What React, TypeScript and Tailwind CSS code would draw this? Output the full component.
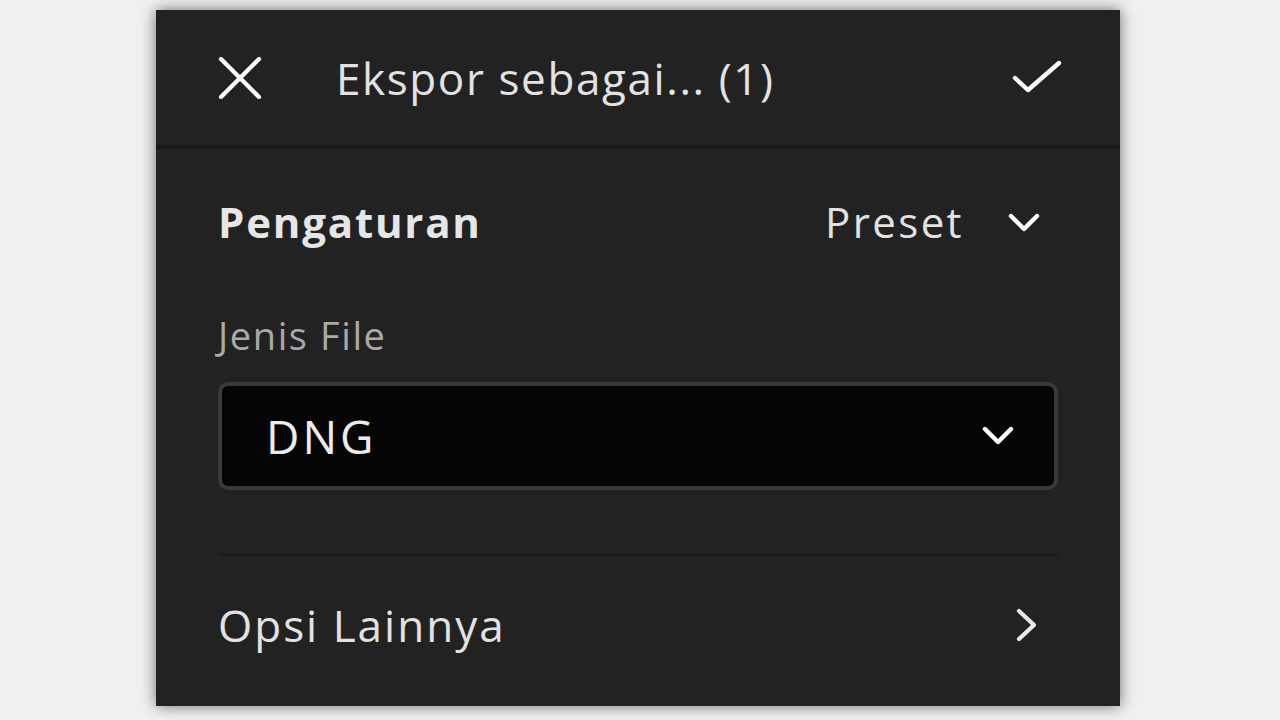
function CloseIcon() {
  return (
    <svg width="44" height="42" viewBox="0 0 44 42" fill="none" className="shrink-0">
      <path d="M3 2 L41 40 M41 2 L3 40" stroke="#fff" strokeWidth="4.2" strokeLinecap="round" />
    </svg>
  );
}

function CheckIcon() {
  return (
    <svg width="50" height="36" viewBox="0 0 50 36" fill="none" className="shrink-0">
      <path
        d="M3 18 L16 30 L47 3"
        stroke="#fff"
        strokeWidth="4.4"
        strokeLinecap="round"
        strokeLinejoin="round"
      />
    </svg>
  );
}

function Chevron({ dir = "down" }: { dir?: "down" | "right" }) {
  if (dir === "right") {
    return (
      <svg width="26" height="36" viewBox="0 0 26 36" fill="none" className="shrink-0">
        <path
          d="M5 4 L20 18 L5 32"
          stroke="#e8e8e8"
          strokeWidth="4.2"
          strokeLinecap="round"
          strokeLinejoin="round"
        />
      </svg>
    );
  }
  return (
    <svg width="32" height="22" viewBox="0 0 32 22" fill="none" className="shrink-0">
      <path
        d="M3 4 L16 17 L29 4"
        stroke="#fff"
        strokeWidth="4.4"
        strokeLinecap="round"
        strokeLinejoin="round"
      />
    </svg>
  );
}

export default function App() {
  return (
    <div
      className="h-[720px] w-[1280px] overflow-hidden bg-[#f0f0f0] pl-[156px] pt-[10px]"
      style={{ fontFamily: '"Open Sans", "Liberation Sans", sans-serif' }}
    >
      <section className="flex h-[696px] w-[964px] flex-col bg-[#222222] shadow-[0_0_14px_rgba(0,0,0,0.55)]">
        <header className="flex h-[135px] items-center pl-[62px] pr-[58px]">
          <CloseIcon />
          <h1 className="ml-[74px] flex-1 text-[44px] leading-none tracking-[1.6px] text-[#e2e2e2]">
            Ekspor sebagai... (1)
          </h1>
          <CheckIcon />
        </header>
        <div className="h-[4px] bg-[#1a1a1a]" />

        <div className="flex flex-1 flex-col px-[62px]">
          <div className="mt-[51px] flex h-[44px] items-center">
            <h2 className="flex-1 text-[42px] font-bold leading-none tracking-[1.8px] text-[#e6e6e6]">
              Pengaturan
            </h2>
            <span className="text-[42px] leading-none tracking-[2.4px] text-[#e2e2e2]">Preset</span>
            <div className="ml-[44px] mr-[18px] pt-[2px]">
              <Chevron />
            </div>
          </div>

          <label className="mt-[71px] h-[40px] text-[38px] leading-[40px] tracking-[1.6px] text-[#a9a9a9]">
            Jenis File
          </label>

          <div className="mt-[27px] flex h-[108px] items-center rounded-[10px] border-[4px] border-[#393939] bg-[#050505] pl-[44px] pr-[40px]">
            <span className="flex-1 text-[46px] leading-none tracking-[3px] text-[#ececec]">DNG</span>
            <Chevron />
          </div>

          <div className="mt-[63px] h-[3px] bg-[#1b1b1b]" />

          <div className="mt-[47px] flex h-[44px] items-center">
            <span className="flex-1 text-[44px] leading-none tracking-[2px] text-[#e2e2e2]">
              Opsi Lainnya
            </span>
            <div className="mr-[18px]">
              <Chevron dir="right" />
            </div>
          </div>
        </div>
      </section>
    </div>
  );
}
